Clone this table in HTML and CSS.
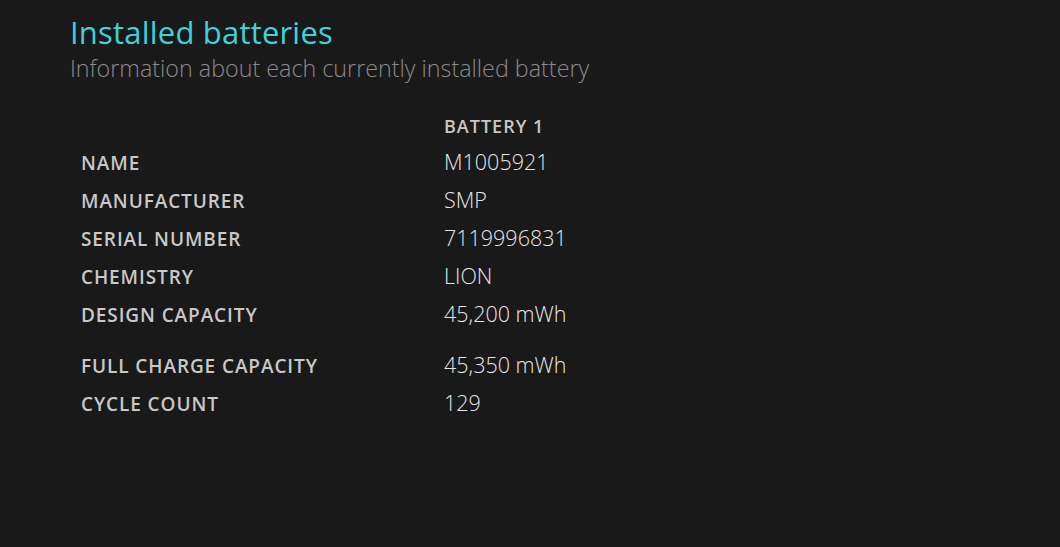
FILE: index.html
```html
<!DOCTYPE html>
<html>
<head>
<meta charset="utf-8">
<link rel="stylesheet" href="styles.css">
</head>
<body>
<div class="page">
  <h1 class="title">Installed batteries</h1>
  <div class="subtitle">Information about each currently installed battery</div>
  <table class="info">
    <thead>
      <tr><th class="label"></th><th class="col">BATTERY 1</th></tr>
    </thead>
    <tbody>
      <tr><td class="label">NAME</td><td class="val">M1005921</td></tr>
      <tr><td class="label">MANUFACTURER</td><td class="val">SMP</td></tr>
      <tr><td class="label">SERIAL NUMBER</td><td class="val">7119996831</td></tr>
      <tr><td class="label">CHEMISTRY</td><td class="val">LION</td></tr>
      <tr class="spaced"><td class="label">DESIGN CAPACITY</td><td class="val">45,200 mWh</td></tr>
      <tr><td class="label">FULL CHARGE CAPACITY</td><td class="val">45,350 mWh</td></tr>
      <tr><td class="label">CYCLE COUNT</td><td class="val">129</td></tr>
    </tbody>
  </table>
</div>
</body>
</html>
```
FILE: styles.css
```css
html, body {
  margin: 0;
  padding: 0;
  background: #191919;
  height: 100%;
}
body {
  font-family: "Open Sans", "Noto Sans", sans-serif;
}
.page {
  padding: 12px 0 0 70px;
}
.title {
  margin: 0;
  font-size: 31px;
  font-weight: 400;
  color: #3fd2db;
  line-height: 40px;
  letter-spacing: 0.2px;
}
.subtitle {
  font-size: 23.3px;
  font-weight: 300;
  color: #8a8a8a;
  line-height: 30px;
  margin-top: 1px;
}
.info {
  border-collapse: collapse;
  margin-top: 27px;
  margin-left: 11px;
}
.info th, .info td {
  padding: 0;
  text-align: left;
  vertical-align: middle;
}
.info th.col {
  font-size: 18px;
  font-weight: 600;
  color: #c8c8c8;
  height: 32px;
  letter-spacing: 1px;
}
.info td.label {
  width: 363px;
  font-size: 19px;
  font-weight: 600;
  color: #c8c8c8;
  height: 35px;
  padding-top: 3px;
  letter-spacing: 0.9px;
}
.info td.val {
  font-size: 21.5px;
  font-weight: 300;
  color: #e6e6e6;
}
.info tr.spaced td {
  padding-bottom: 13px;
}
```
